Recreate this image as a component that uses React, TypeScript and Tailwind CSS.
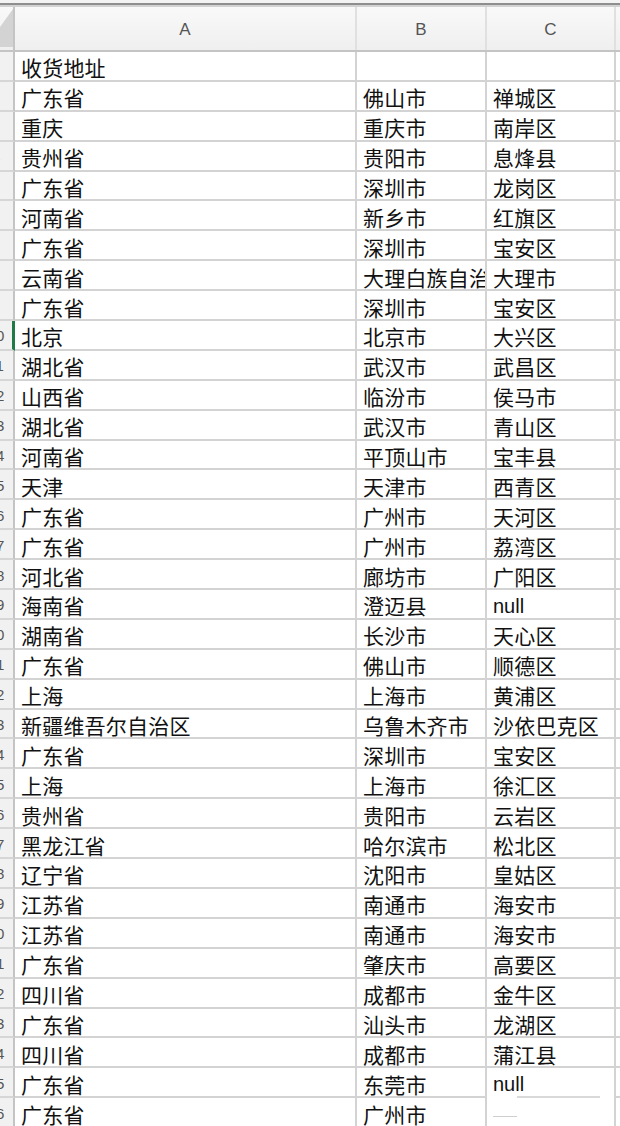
import React from "react";

const rows: [string, string, string][] = [
  ["收货地址", "", ""],
  ["广东省", "佛山市", "禅城区"],
  ["重庆", "重庆市", "南岸区"],
  ["贵州省", "贵阳市", "息烽县"],
  ["广东省", "深圳市", "龙岗区"],
  ["河南省", "新乡市", "红旗区"],
  ["广东省", "深圳市", "宝安区"],
  ["云南省", "大理白族自治州", "大理市"],
  ["广东省", "深圳市", "宝安区"],
  ["北京", "北京市", "大兴区"],
  ["湖北省", "武汉市", "武昌区"],
  ["山西省", "临汾市", "侯马市"],
  ["湖北省", "武汉市", "青山区"],
  ["河南省", "平顶山市", "宝丰县"],
  ["天津", "天津市", "西青区"],
  ["广东省", "广州市", "天河区"],
  ["广东省", "广州市", "荔湾区"],
  ["河北省", "廊坊市", "广阳区"],
  ["海南省", "澄迈县", "null"],
  ["湖南省", "长沙市", "天心区"],
  ["广东省", "佛山市", "顺德区"],
  ["上海", "上海市", "黄浦区"],
  ["新疆维吾尔自治区", "乌鲁木齐市", "沙依巴克区"],
  ["广东省", "深圳市", "宝安区"],
  ["上海", "上海市", "徐汇区"],
  ["贵州省", "贵阳市", "云岩区"],
  ["黑龙江省", "哈尔滨市", "松北区"],
  ["辽宁省", "沈阳市", "皇姑区"],
  ["江苏省", "南通市", "海安市"],
  ["江苏省", "南通市", "海安市"],
  ["广东省", "肇庆市", "高要区"],
  ["四川省", "成都市", "金牛区"],
  ["广东省", "汕头市", "龙湖区"],
  ["四川省", "成都市", "蒲江县"],
  ["广东省", "东莞市", "null"],
  ["广东省", "广州市", ""],
];

const cellFont = {
  fontFamily: '"Noto Sans CJK SC", "Liberation Sans", sans-serif',
};

function Cell({
  text,
  width,
  noBottom,
  extra,
  inner,
}: {
  text: string;
  width: string;
  noBottom?: boolean;
  extra?: React.ReactNode;
  inner?: React.ReactNode;
}) {
  const isLatin = text === "null";
  return (
    <div
      className={`${width} shrink-0 h-full flex flex-col border-r-2 border-[#d3d3d3] ${
        noBottom ? "" : "border-b-2 border-b-[#d3d3d3]"
      } overflow-hidden`}
    >
      <div
        className={`flex-1 flex items-center pl-[6px] pt-[4px] whitespace-nowrap leading-none text-[#111] ${
          isLatin ? "text-[20px] font-['Liberation_Sans',sans-serif]" : "text-[21px] tracking-[0.2px]"
        }`}
        style={isLatin ? undefined : cellFont}
      >
        {text}
        {inner}
      </div>
      {extra}
    </div>
  );
}

export default function App() {
  return (
    <div className="w-[620px] h-[1126px] overflow-hidden bg-white flex flex-col">
      {/* top window edge */}
      <div className="h-[3px] bg-[#f3f3f3] shrink-0" />
      <div className="h-[2px] bg-[#8e8e8e] shrink-0" />
      <div className="h-[2px] bg-[#d2d2d2] shrink-0" />
      {/* column header */}
      <div className="h-[45px] shrink-0 flex bg-gradient-to-b from-[#f9f9f9] to-[#efefef] border-b-2 border-[#c4c4c4]">
        <div className="w-[15px] shrink-0 border-r-2 border-[#c4c4c4] flex flex-col justify-end pb-[3px]">
          <svg width="13" height="38" viewBox="0 0 13 38">
            <polygon points="13,0 13,38 0,38 0,18" fill="#d3d3d3" />
          </svg>
        </div>
        {[
          ["A", "w-[342px]"],
          ["B", "w-[130px]"],
          ["C", "w-[129px]"],
        ].map(([l, w]) => (
          <div
            key={l}
            className={`${w} shrink-0 border-r-2 border-[#e0e0e0] flex items-center justify-center pt-[2px] text-[17px] leading-none text-[#555] font-['Liberation_Sans',sans-serif]`}
          >
            {l}
          </div>
        ))}
        <div className="flex-1" />
      </div>
      {/* rows */}
      {rows.map((r, i) => {
        const num = i + 1;
        const selected = num === 10;
        const lastNull = i === 34;
        const last = i === 35;
        return (
          <div key={i} className="h-[29.9px] shrink-0 flex">
            <div
              className={`w-[15px] shrink-0 h-full overflow-hidden bg-[#f1f1f1] border-b-2 border-b-[#d6d6d6] ${
                selected ? "border-r-[3px] border-r-[#1f7a45]" : "border-r-2 border-r-[#c4c4c4]"
              }`}
            >
              <div className="ml-[-22px] w-[36px] h-full flex items-center justify-center pt-[2px] text-[15px] leading-none text-[#555] font-['Liberation_Sans',sans-serif]">
                {num}
              </div>
            </div>
            <Cell text={r[0]} width="w-[342px]" />
            <Cell text={r[1]} width="w-[130px]" />
            <Cell
              text={r[2]}
              width="w-[129px]"
              noBottom={lastNull}
              inner={last ? <div className="w-[24px] h-[1px] bg-[#cfcfcf] mt-[4px]" /> : undefined}
              extra={
                lastNull ? (
                  <div className="h-[2px] shrink-0 flex">
                    <div className="w-[30px] bg-white" />
                    <div className="w-[83px] bg-[#d9d9d9]" />
                  </div>
                ) : undefined
              }
            />
            <div className="flex-1 border-b-2 border-b-[#d3d3d3]" />
          </div>
        );
      })}
    </div>
  );
}
